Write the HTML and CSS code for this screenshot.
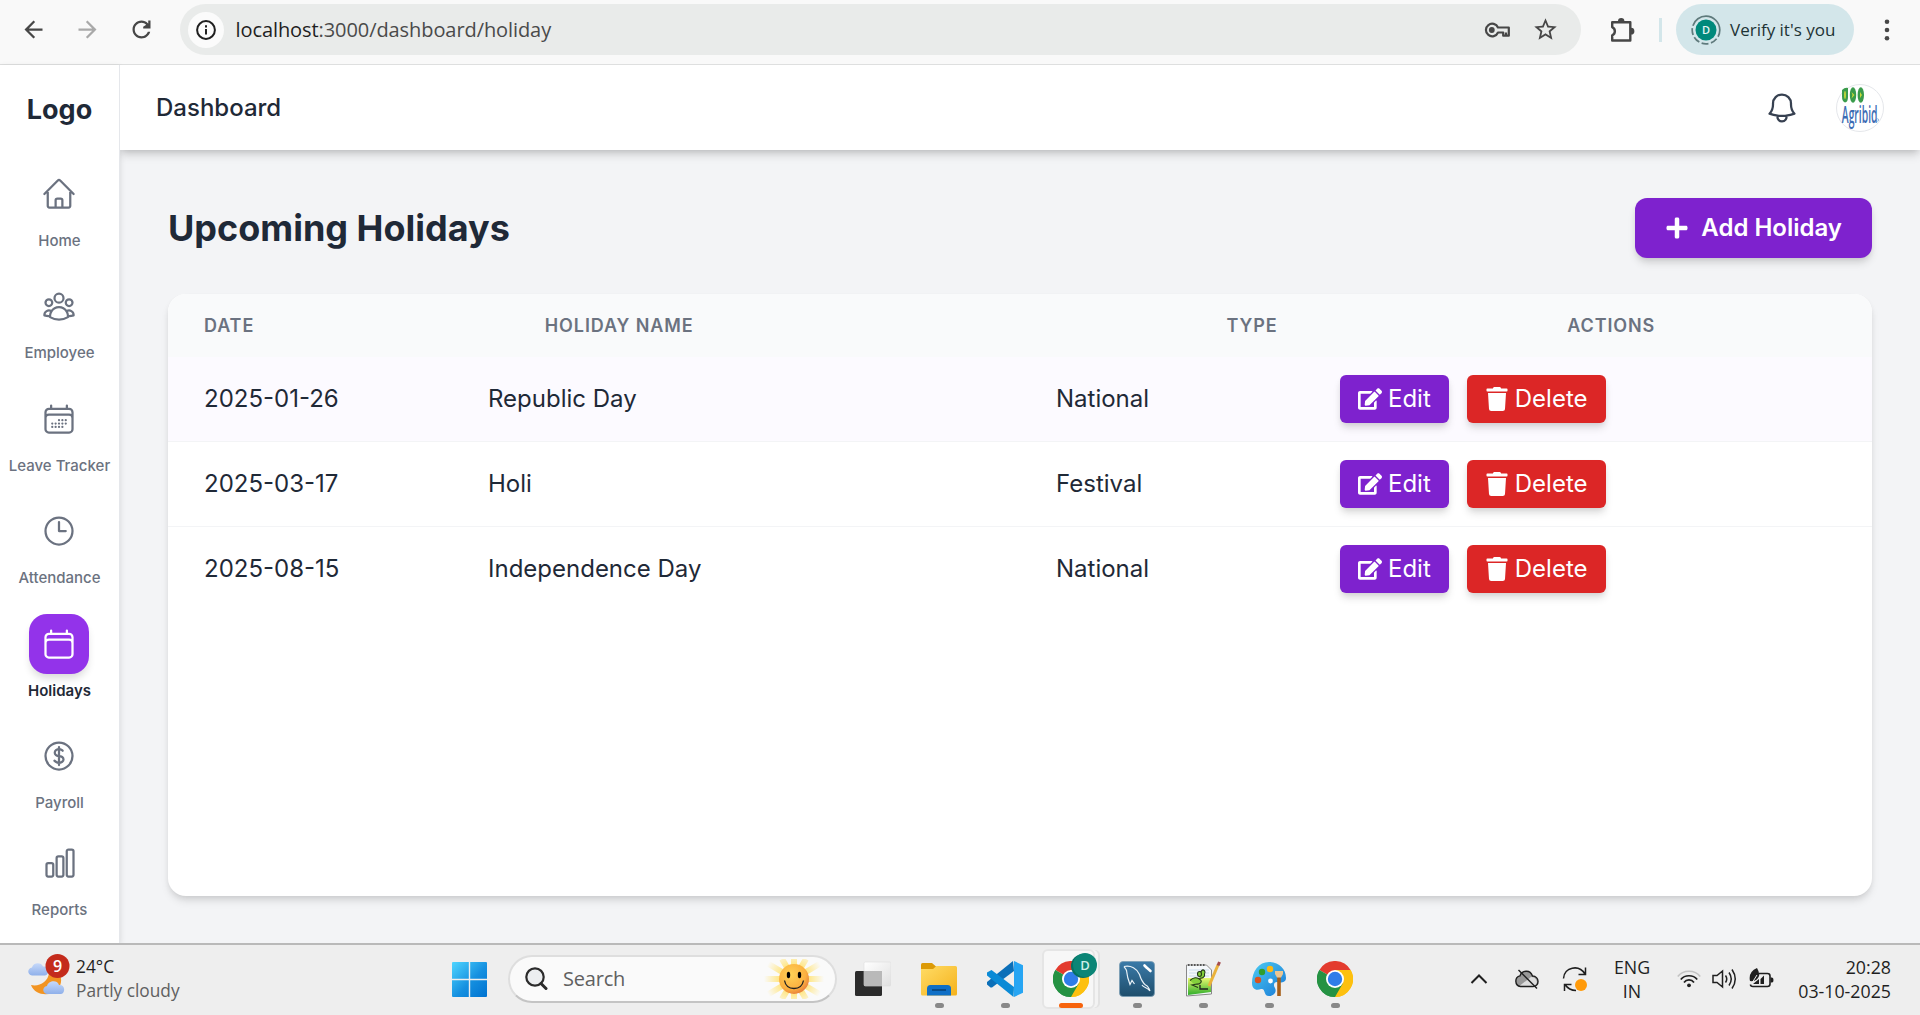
FILE: index.html
```html
<!DOCTYPE html>
<html lang="en">
<head>
<meta charset="utf-8">
<title>Dashboard - Holidays</title>
<link rel="stylesheet" href="styles.css">
</head>
<body>
<svg class="defs" width="0" height="0" aria-hidden="true">
  <defs>
    <symbol id="edit" viewBox="0 0 576 512"><path d="M402.6 83.2l90.2 90.2c3.8 3.8 3.8 10 0 13.8L274.4 405.6l-92.8 10.3c-12.4 1.4-22.9-9.1-21.5-21.5l10.3-92.8L388.8 83.2c3.8-3.8 10-3.8 13.8 0zm162-22.9l-48.8-48.8c-15.2-15.2-39.9-15.2-55.2 0l-35.4 35.4c-3.8 3.8-3.8 10 0 13.8l90.2 90.2c3.8 3.8 10 3.8 13.8 0l35.4-35.4c15.2-15.3 15.2-40 0-55.2zM384 346.2V448H64V128h229.8c3.2 0 6.2-1.3 8.5-3.5l40-40c7.6-7.6 2.2-20.5-8.5-20.5H48C21.5 64 0 85.5 0 112v352c0 26.5 21.5 48 48 48h352c26.5 0 48-21.5 48-48V306.2c0-10.7-12.9-16-20.5-8.5l-40 40c-2.2 2.3-3.5 5.3-3.5 8.5z"/></symbol>
    <symbol id="trash" viewBox="0 0 448 512"><path d="M432 32H312l-9.4-18.7A24 24 0 0 0 281.1 0H166.8a23.72 23.72 0 0 0-21.4 13.3L136 32H16A16 16 0 0 0 0 48v32a16 16 0 0 0 16 16h416a16 16 0 0 0 16-16V48a16 16 0 0 0-16-16zM53.2 467a48 48 0 0 0 47.9 45h245.8a48 48 0 0 0 47.9-45L416 128H32z"/></symbol>
    <symbol id="chrome" viewBox="0 0 36 36">
      <path d="M18 18 2.4 9A18 18 0 0 1 33.6 9z" fill="#e33b2e"/>
      <path d="M18 18 33.6 9A18 18 0 0 1 18 36z" fill="#fdc00f"/>
      <path d="M18 18V36A18 18 0 0 1 2.4 9z" fill="#259243"/>
      <path d="M18 9H33.6A18 18 0 0 1 18 36L25.8 22.5z" fill="#fdc00f"/>
      <path d="M10.2 22.5 2.4 9A18 18 0 0 0 18 36L25.8 22.5z" fill="#259243"/>
      <circle cx="18" cy="18" r="9" fill="#fff"/><circle cx="18" cy="18" r="7.2" fill="#2f7de9"/>
    </symbol>
    <linearGradient id="win" x1="0" y1="0" x2="1" y2="1"><stop offset="0" stop-color="#4fd5ff"/><stop offset=".55" stop-color="#1590e0"/><stop offset="1" stop-color="#0072d0"/></linearGradient>
    <linearGradient id="folder" x1="0" y1="0" x2="1" y2="1"><stop offset="0" stop-color="#ffdc66"/><stop offset="1" stop-color="#f5b21c"/></linearGradient>
    <linearGradient id="sql" x1="0" y1="0" x2="0" y2="1"><stop offset="0" stop-color="#3a7aa8"/><stop offset="1" stop-color="#1f4e6c"/></linearGradient>
    <linearGradient id="paint" x1="0" y1="0" x2="1" y2="1"><stop offset="0" stop-color="#4ccbf2"/><stop offset="1" stop-color="#1878d6"/></linearGradient>
    <linearGradient id="cloud" x1="0" y1="0" x2="0" y2="1"><stop offset="0" stop-color="#c6d9fa"/><stop offset="1" stop-color="#8fb0ea"/></linearGradient>
    <linearGradient id="grass" x1="0" y1="0" x2="0" y2="1"><stop offset="0" stop-color="#e8f870"/><stop offset="1" stop-color="#2fae2b"/></linearGradient>
    <linearGradient id="glass" x1="0" y1="0" x2="1" y2="1"><stop offset="0" stop-color="#fff"/><stop offset="1" stop-color="#e0e0e0"/></linearGradient>
    <radialGradient id="smile" cx=".4" cy=".35" r=".7"><stop offset="0" stop-color="#ffd257"/><stop offset=".7" stop-color="#fbb040"/><stop offset="1" stop-color="#e5793c"/></radialGradient>
    <radialGradient id="rays" gradientUnits="userSpaceOnUse" cx="30" cy="20" r="30"><stop offset=".5" stop-color="#ffe78a"/><stop offset="1" stop-color="#ffe78a" stop-opacity="0"/></radialGradient>
  </defs>
</svg>

<header class="browser">
  <div class="nav">
    <svg class="mi" viewBox="0 0 24 24"><path d="M20 11H7.83l5.59-5.59L12 4l-8 8 8 8 1.41-1.41L7.83 13H20v-2z"/></svg>
    <svg class="mi off" viewBox="0 0 24 24"><path d="M12 4l-1.41 1.41L16.17 11H4v2h12.17l-5.58 5.59L12 20l8-8z"/></svg>
    <svg class="mi" viewBox="0 0 24 24"><path d="M17.65 6.35C16.2 4.9 14.21 4 12 4c-4.42 0-7.99 3.58-7.99 8s3.57 8 7.99 8c3.73 0 6.84-2.55 7.73-6h-2.08c-.82 2.33-3.04 4-5.65 4-3.31 0-6-2.69-6-6s2.69-6 6-6c1.66 0 3.14.69 4.22 1.78L13.500 9.500V11H20V4h-2v2.700z"/></svg>
  </div>
  <div class="url">
    <span class="info"><svg width="20" height="20" viewBox="0 0 20 20" fill="none" stroke="#1f1f1f" stroke-width="2"><circle cx="10" cy="10" r="8.9"/><path d="M10 9v5.500M10 5.200v2.200"/></svg></span>
    <span class="address"><b>localhost</b>:3000/dashboard/holiday</span>
    <svg width="27" height="18" viewBox="0 0 27 18" fill="none" stroke="#474747" stroke-width="2.200"><path d="M14 6.500A6.300 6.300 0 1 0 14 11.500h5.200v3.200h5.600V6.500z" stroke-linejoin="round"/><circle cx="7.800" cy="9" r="2.900" fill="#474747" stroke="none"/><path d="M22 11.500v3"/></svg>
    <svg class="mi star" viewBox="0 0 24 24"><path d="M22 9.240l-7.190-.62L12 2 9.190 8.630 2 9.240l5.460 4.730L5.820 21 12 17.270 18.180 21l-1.630-7.030L22 9.240zM12 15.400l-3.760 2.270 1-4.280-3.320-2.880 4.380-.38L12 6.100l1.710 4.040 4.380.38-3.320 2.880 1 4.280L12 15.400z"/></svg>
  </div>
  <svg class="puzzle" width="26" height="26" viewBox="0 0 26 26"><path d="M3.200 5.200h18.100v18.300H3.200v-5.200a4.500 4.500 0 0 0 0-8.200z" fill="none" stroke="#474747" stroke-width="2.400" stroke-linejoin="round"/><path d="M9 4.200a3.200 3.200 0 0 1 6.400 0zM22 10.800a3.400 3.400 0 0 1 0 6.800z" fill="#474747"/></svg>
  <span class="split"></span>
  <div class="verify">
    <svg width="30" height="30" viewBox="0 0 30 30"><circle cx="15" cy="15" r="13.800" fill="none" stroke="#5f7a7c" stroke-width="1.700" stroke-dasharray="7 2.500 7 2.500 7 2.500 7 2.500 7 2.500 39.200 0"/><circle cx="15" cy="15" r="10.500" fill="#00897b"/><text x="15" y="19" text-anchor="middle" class="initial">D</text></svg>
    <span>Verify it's you</span>
  </div>
  <svg class="dots" width="6" height="22" viewBox="0 0 6 22"><circle cx="3" cy="2.700" r="2.300"/><circle cx="3" cy="11" r="2.300"/><circle cx="3" cy="19.300" r="2.300"/></svg>
</header>

<div class="app">
  <aside class="sidebar">
    <div class="logo">Logo</div>
    <nav class="menu">
      <a class="item"><span class="tile"><svg viewBox="0 0 24 24"><path d="M2.250 12l8.954-8.955a1.126 1.126 0 011.591 0L21.750 12M4.500 9.750v10.125c0 .621.504 1.125 1.125 1.125H9.750v-4.875c0-.621.504-1.125 1.125-1.125h2.250c.621 0 1.125.504 1.125 1.125V21h4.125c.621 0 1.125-.504 1.125-1.125V9.750M8.250 21h8.250"/></svg></span><span>Home</span></a>
      <a class="item"><span class="tile"><svg viewBox="0 0 24 24"><path d="M18 18.720a9.094 9.094 0 003.741-.479 3 3 0 00-4.682-2.720m.94 3.198l.001.031c0 .225-.012.447-.037.666A11.944 11.944 0 0112 21c-2.170 0-4.207-.576-5.963-1.584A6.062 6.062 0 016 18.719m12 0a5.971 5.971 0 00-.941-3.197m0 0A5.995 5.995 0 0012 12.750a5.995 5.995 0 00-5.058 2.772m0 0a3 3 0 00-4.681 2.720 8.986 8.986 0 003.740.477m.94-3.197a5.971 5.971 0 00-.94 3.197M15 6.750a3 3 0 11-6 0 3 3 0 016 0zm6 3a2.250 2.250 0 11-4.500 0 2.250 2.250 0 014.500 0zm-13.500 0a2.250 2.250 0 11-4.500 0 2.250 2.250 0 014.500 0z"/></svg></span><span>Employee</span></a>
      <a class="item"><span class="tile"><svg viewBox="0 0 24 24"><path d="M6.750 3v2.250M17.250 3v2.250M3 18.750V7.500a2.250 2.250 0 012.250-2.250h13.500A2.250 2.250 0 0121 7.500v11.250m-18 0A2.250 2.250 0 005.250 21h13.500A2.250 2.250 0 0021 18.750m-18 0v-7.500A2.250 2.250 0 015.250 9h13.500A2.250 2.250 0 0121 11.250v7.500m-9-6h.008v.008H12v-.008zM12 15h.008v.008H12V15zm0 2.250h.008v.008H12v-.008zM9.750 15h.008v.008H9.750V15zm0 2.250h.008v.008H9.750v-.008zM7.500 15h.008v.008H7.500V15zm0 2.250h.008v.008H7.500v-.008zm6.750-4.500h.008v.008h-.008v-.008zm0 2.250h.008v.008h-.008V15zm0 2.250h.008v.008h-.008v-.008zm2.250-4.500h.008v.008H16.500v-.008zm0 2.250h.008v.008H16.500V15z"/></svg></span><span>Leave Tracker</span></a>
      <a class="item"><span class="tile"><svg viewBox="0 0 24 24"><path d="M12 6v6h4.500m4.500 0a9 9 0 11-18 0 9 9 0 0118 0z"/></svg></span><span>Attendance</span></a>
      <a class="item active"><span class="tile"><svg viewBox="0 0 24 24"><path d="M6.750 3v2.250M17.250 3v2.250M3 18.750V7.500a2.250 2.250 0 012.250-2.250h13.500A2.250 2.250 0 0121 7.500v11.250m-18 0A2.250 2.250 0 005.250 21h13.500A2.250 2.250 0 0021 18.750m-18 0v-7.500A2.250 2.250 0 015.250 9h13.500A2.250 2.250 0 0121 11.250v7.500"/></svg></span><span>Holidays</span></a>
      <a class="item"><span class="tile"><svg viewBox="0 0 24 24"><path d="M12 6v12m-3-2.818l.879.659c1.171.879 3.070.879 4.242 0 1.172-.879 1.172-2.303 0-3.182C13.536 12.219 12.768 12 12 12c-.725 0-1.450-.220-2.003-.659-1.106-.879-1.106-2.303 0-3.182s2.900-.879 4.006 0l.415.330M21 12a9 9 0 11-18 0 9 9 0 0118 0z"/></svg></span><span>Payroll</span></a>
      <a class="item last"><span class="tile"><svg viewBox="0 0 24 24"><path d="M3 13.125C3 12.504 3.504 12 4.125 12h2.250c.621 0 1.125.504 1.125 1.125v6.750C7.500 20.496 6.996 21 6.375 21h-2.250A1.125 1.125 0 013 19.875v-6.750zM9.750 8.625c0-.621.504-1.125 1.125-1.125h2.250c.621 0 1.125.504 1.125 1.125v11.250c0 .621-.504 1.125-1.125 1.125h-2.250a1.125 1.125 0 01-1.125-1.125V8.625zM16.500 4.125c0-.621.504-1.125 1.125-1.125h2.250C20.496 3 21 3.504 21 4.125v15.750c0 .621-.504 1.125-1.125 1.125h-2.250a1.125 1.125 0 01-1.125-1.125V4.125z"/></svg></span><span>Reports</span></a>
    </nav>
  </aside>

  <div class="page">
    <header class="topbar">
      <span class="crumb">Dashboard</span>
      <svg class="bell" viewBox="0 0 24 24"><path d="M14.857 17.082a23.848 23.848 0 005.454-1.310A8.967 8.967 0 0118 9.750v-.7V9A6 6 0 006 9v.75a8.967 8.967 0 01-2.312 6.022c1.733.64 3.560 1.085 5.455 1.310m5.714 0a24.255 24.255 0 01-5.714 0m5.714 0a3 3 0 11-5.714 0"/></svg>
      <svg class="avatar" viewBox="0 0 48 48">
        <circle cx="24" cy="24" r="23.500" fill="#fff" stroke="#e5e7eb"/>
        <g fill="#3a9b4b"><path d="M6 6q3-3 6-2v9q0 5-3 5.500-3-1-3-6z"/><ellipse cx="17" cy="11" rx="3.200" ry="7.700"/><ellipse cx="24.800" cy="11" rx="3.200" ry="7.700"/></g>
        <g fill="#c8d93a"><ellipse cx="9" cy="11" rx=".9" ry="4"/><path d="M15.500 8l3 3-3 3.500 1-3.500z"/><path d="M24 8l2 3-2 3z"/></g>
        <text class="brand" transform="translate(5.800 38.500) scale(.45 1)">Agribid</text>
        <circle cx="41.500" cy="36" r="1.200" fill="none" stroke="#5b8fd0" stroke-width=".6"/>
      </svg>
    </header>

    <main class="content">
      <div class="heading">
        <h1>Upcoming Holidays</h1>
        <button class="btn add"><svg viewBox="0 0 448 512"><path d="M416 208H272V64c0-17.670-14.330-32-32-32h-32c-17.670 0-32 14.330-32 32v144H32c-17.670 0-32 14.330-32 32v32c0 17.670 14.330 32 32 32h144v144c0 17.670 14.330 32 32 32h32c17.670 0 32-14.330 32-32V304h144c17.670 0 32-14.330 32-32v-32c0-17.670-14.330-32-32-32z"/></svg>Add Holiday</button>
      </div>
      <section class="card">
        <div class="thead"><span>Date</span><span class="wide">Holiday Name</span><span>Type</span><span>Actions</span></div>
        <div class="row tint"><span>2025-01-26</span><span class="wide">Republic Day</span><span>National</span><div class="actions"><button class="btn edit"><svg><use href="#edit"/></svg>Edit</button><button class="btn delete"><svg><use href="#trash"/></svg>Delete</button></div></div>
        <div class="row"><span>2025-03-17</span><span class="wide">Holi</span><span>Festival</span><div class="actions"><button class="btn edit"><svg><use href="#edit"/></svg>Edit</button><button class="btn delete"><svg><use href="#trash"/></svg>Delete</button></div></div>
        <div class="row"><span>2025-08-15</span><span class="wide">Independence Day</span><span>National</span><div class="actions"><button class="btn edit"><svg><use href="#edit"/></svg>Edit</button><button class="btn delete"><svg><use href="#trash"/></svg>Delete</button></div></div>
      </section>
    </main>
  </div>
</div>

<footer class="taskbar">
  <div class="weather">
    <svg width="42" height="42" viewBox="0 0 42 42">
      <path d="M3 31c8 2 17-3 18-12l6-3c7 3 8 13 3 19-7 8-23 7-27-4z" fill="#f29422"/>
      <path d="M4 21.500c-5-1-5-7 0-8 1-5 9-6 11-1 6-1 7 8 2 9z" fill="url(#cloud)"/>
      <path d="M19 40c-5-1-5-7 0-8 1-5 10-7 12-1 6-1 7 8 2 9z" fill="url(#cloud)"/>
      <circle cx="29.500" cy="12" r="12" fill="#c42b1c"/>
      <text x="29.500" y="17.500" text-anchor="middle" class="count">9</text>
    </svg>
    <div class="forecast"><div>24°C</div><div class="muted">Partly cloudy</div></div>
  </div>

  <svg class="start" width="35" height="35" viewBox="0 0 35 35" fill="url(#win)"><path d="M1 0h15.800v16.800H0V1a1 1 0 0 1 1-1zM18.200 0H34a1 1 0 0 1 1 1v15.800H18.200zM0 18.200h16.800V35H1a1 1 0 0 1-1-1zM18.200 18.200H35V34a1 1 0 0 1-1 1H18.200z"/></svg>

  <div class="search">
    <svg width="23" height="24" viewBox="0 0 23 24" fill="#eceef0" stroke="#2b2b2b"><circle cx="10" cy="10" r="8.700" stroke-width="2.200"/><path d="M16 16.500l5 5" stroke-width="3" stroke-linecap="round"/></svg>
    <span>Search</span>
    <svg class="sun" width="60" height="40" viewBox="0 0 60 40">
      <g stroke="url(#rays)" stroke-width="6"><path d="M0 20.010H60M30.010 0V40M18 0 42 40M42 0 18 40M3 4 57 36M57 4 3 36"/></g>
      <circle cx="30" cy="20" r="15" fill="url(#smile)"/>
      <ellipse cx="24.500" cy="16" rx="1.700" ry="3.300"/><ellipse cx="35.500" cy="16" rx="1.700" ry="3.300"/>
      <path d="M20.500 21.500q1.500 8 9.500 8t9.500-8" fill="none" stroke="#222" stroke-width="1.300"/>
    </svg>
  </div>

  <div class="tasks">
    <span class="task"><svg viewBox="0 0 36 36"><rect x="0" y="10" width="27" height="25" rx="1.500" fill="#2b2b2b"/><rect x="9" y="1" width="27" height="24" rx="1.500" fill="url(#glass)" stroke="#ddd" stroke-width=".6"/><path d="M9 10h18v15H9z" fill="#b9b9b9"/></svg></span>
    <span class="task open"><svg viewBox="0 0 36 36"><path d="M0 3.500Q0 2 1.500 2H11l4 3.500V12H0z" fill="#dc9a06"/><path d="M0 8h12l3.500-3H34.500Q36 5 36 6.500V33q0 1.500-1.500 1.500h-33Q0 34.500 0 33z" fill="url(#folder)"/><path d="M6 34.500v-7q0-3.500 3.500-3.500h17q3.500 0 3.500 3.500v7z" fill="#0f6fc6"/><path d="M11 29h14" stroke="#073f75" stroke-width="1.500"/></svg></span>
    <span class="task open"><svg viewBox="0 0 36 36"><path d="M26 0 27 10 5 26.500 3.500 26.500 0 23.500V21z" fill="#0b6fb8"/><path d="M26.500 36 0 14.500V11.500L4.500 9 27 26z" fill="#0a8ad6"/><path d="M27 0 36 4.200V31.800L27 36z" fill="#26a5f3"/></svg></span>
    <span class="task open current"><svg viewBox="0 0 36 36"><use href="#chrome"/></svg><i class="badge">D</i></span>
    <span class="task open"><svg viewBox="0 0 36 36"><rect x=".5" y=".5" width="35" height="35" rx="3.500" fill="url(#sql)" stroke="#7a9db4" stroke-width=".8"/><path d="M5 5.500c7-1.500 13 2 15.500 8 1.500 5 3 8 6 10.500 2.500 1 3.500 3 4.500 6-3-4-6-3-8-6M5 5.500c1 2 2 2 2.500 4 .5 5 1.500 9 3.500 14l2-4 2.500 3.500" fill="none" stroke="#e8f1f7" stroke-width="1.200"/><path d="M25.500 4.500l2.500 2.500M27 6l4.500 4" stroke="#fff" stroke-width="2.600" stroke-linecap="round"/></svg></span>
    <span class="task open"><svg viewBox="0 0 36 36"><path d="M1.500 4h20l5 5v24L1.500 35z" fill="#f5f8fb" stroke="#888"/><path d="M3 4h18" stroke="#555" stroke-width="2" stroke-dasharray="1.500 1.500"/><path d="M4 9h20M4 12h20M4 15h20" stroke="#c0d4ea" stroke-width=".8"/><path d="M3 17h23v14L3 34z" fill="url(#grass)"/><path d="M5 19.500c3-3 7-4 10-1 3 2 0 5-3 4.500l-5 1 6 2.500M12.500 13a2 2.500 0 1 1 4 0 2 2.500 0 1 1-4 0M16.500 13a2 2.500 0 1 1 3 0v2q-2 3-5 2" fill="#83cf3c" stroke="#25391a" stroke-width="1.100"/><path d="M15 24v4h8" fill="none" stroke="#222" stroke-width="1.300"/><path d="M33 4 24 25" stroke="#eab23a" stroke-width="3"/><path d="M34.500 1 33 4.500" stroke="#a44c4c" stroke-width="3"/></svg></span>
    <span class="task open"><svg viewBox="0 0 36 36"><path d="M18 1c10 0 17 7 17 16 0 5-6 5-9 4-3 0-4 3-2 6 2 4-1 8-6 8-6 0-3-8-8-7-5 2-9 0-9-6C1 10 8 1 18 1z" fill="url(#paint)"/><circle cx="11" cy="11" r="3.200" fill="#2f9e2d"/><circle cx="19" cy="8" r="3.200" fill="#fcb813"/><circle cx="7" cy="19" r="3.200" fill="#d9531e"/><circle cx="19.500" cy="20" r="2.400" fill="#fff"/><path d="M26.200 14h3.600v21h-3.600z" fill="#a65f1a"/><path d="M24 10h8v3l-2 3.500h-4L24 13z" fill="#e9c592"/></svg></span>
    <span class="task open"><svg viewBox="0 0 36 36"><use href="#chrome"/></svg></span>
  </div>

  <div class="tray">
    <svg class="chev" width="18" height="12" viewBox="0 0 18 12" fill="none" stroke="#1f1f1f" stroke-width="2"><path d="M1.500 10 9 2.500 16.500 10"/></svg>
    <svg class="cloud" width="26" height="22" viewBox="0 0 26 22"><path d="M6.500 18.500a5.400 5.400 0 0 1-.5-10.600C7.500 2.500 16 1 18.500 8c7 0 7.500 10.500.5 10.500z" fill="#999" stroke="#1f1f1f" stroke-width="1.400"/><path d="M6 17.500 17 9q5 0 6 5-1 4-5 3.600z" fill="#ddd"/><path d="M4.500 2 23 20.500" stroke="#1f1f1f" stroke-width="1.500"/></svg>
    <svg class="sync" width="26" height="26" viewBox="0 0 26 26" fill="none" stroke="#1f1f1f" stroke-width="1.500"><path d="M1.500 12.500C2 1 17-2 23 8M23.500 1.500V8.500H16.500M2.500 25V18.500H9.500M3 18.500q4 6 11 6"/><circle cx="19" cy="19" r="6" fill="#ff9a0a" stroke="none"/></svg>
    <div class="lang"><div>ENG</div><div>IN</div></div>
    <svg class="wifi" width="24" height="18" viewBox="0 0 24 18" fill="none" stroke="#1f1f1f" stroke-width="1.700"><path d="M.8 6.500C6-.5 18-.5 23.200 6.500" stroke="#c3c3c3"/><path d="M3.800 9.500c4-5 12.400-5 16.400 0M7 12.500c2.500-3.500 7.500-3.500 10 0"/><circle cx="12" cy="15.300" r="1.900" fill="#1f1f1f" stroke="none"/></svg>
    <svg class="vol" width="25" height="22" viewBox="0 0 25 22" fill="none" stroke="#1f1f1f" stroke-width="1.500"><path d="M1 7.500h4L10.500 3v16L5 14.500H1zM13.500 7.500q2.500 3.500 0 7M17 4.500q4.500 6.500 0 13M20 1.500q6.500 9.500 0 19"/></svg>
    <svg class="batt" width="25" height="20" viewBox="0 0 25 20"><path d="M10 5.500h8.500q2.500 0 2.500 2.500v8q0 2.500-2.500 2.500H4q-2.500 0-2.500-2" fill="none" stroke="#1f1f1f" stroke-width="1.600"/><path d="M21.500 9.500h1.500q1.500 0 1.500 2.500t-1.500 2.500h-1.500zM8 0q3 5 2 8-2 6-9 5Q-1 4 8 0zM4 16 10 11V16zM11.500 16 11.500 11 15 7.500V16z" fill="#1f1f1f"/><path d="M3 15 8 7" stroke="#eee" stroke-width="1"/></svg>
    <div class="clock"><div>20:28</div><div>03-10-2025</div></div>
  </div>
</footer>
</body>
</html>
```
FILE: styles.css
```css
* { box-sizing: border-box; }
html, body { height: 100%; }
body {
  margin: 0;
  display: flex;
  flex-direction: column;
  overflow: hidden;
  font-family: Inter, "Liberation Sans", sans-serif;
  font-size: 24px;
  color: #1f2937;
  background: #f3f4f6;
}
svg { display: block; flex: none; }
.defs { position: absolute; }

/* Browser toolbar */
.browser {
  height: 65px;
  flex: none;
  display: flex;
  align-items: center;
  padding: 0 30px 5px 20px;
  background: #f9f9f9;
  border-bottom: 1px solid #dedfdf;
  font-family: "Open Sans", "Noto Sans", sans-serif;
}
.nav { display: flex; gap: 27px; width: 160px; }
.mi { width: 27px; height: 27px; fill: #474747; }
.mi.off { fill: #a9a9a9; }
.url {
  width: 1401px;
  height: 51px;
  display: flex;
  align-items: center;
  padding: 0 22px 0 8px;
  border-radius: 26px;
  background: #e9ebea;
}
.info {
  width: 36px;
  height: 36px;
  margin-right: 11.500px;
  display: grid;
  place-items: center;
  border-radius: 50%;
  background: #fbfbfb;
}
.address { flex: 1; font-size: 20px; letter-spacing: -.08px; color: #4a4a4a; white-space: nowrap; }
.address b { font-weight: 400; color: #1f1f1f; }
.star { margin-left: 21px; }
.puzzle { margin-left: 28px; }
.split { width: 3px; height: 24px; margin: 0 14px 0 24px; background: #d3e6ea; }
.verify {
  width: 178px;
  height: 51px;
  display: flex;
  align-items: center;
  gap: 9px;
  padding-left: 15px;
  border-radius: 26px;
  background: #d3e6ea;
  font-size: 17px;
  color: #1d3335;
  white-space: nowrap;
}
.initial { font: 600 11px "Open Sans", sans-serif; fill: #e6f6f4; }
.dots { margin-left: auto; fill: #474747; }

/* Application shell */
.app { flex: 1; min-height: 0; display: flex; }
.sidebar {
  width: 120px;
  flex: none;
  background: #fff;
  border-right: 1px solid #e5e7eb;
  box-shadow: 0 2px 6px rgba(0, 0, 0, .12);
  text-align: center;
}
.logo { padding-top: 27px; font-size: 27px; line-height: 36px; font-weight: 700; }
.menu { display: flex; flex-direction: column; padding-top: 36px; gap: 12.400px; }
.item {
  height: 100px;
  display: flex;
  flex-direction: column;
  align-items: center;
  gap: 5px;
  font-size: 15px;
  line-height: 24px;
  font-weight: 500;
  color: #6b7280;
  white-space: nowrap;
}
.tile { width: 60px; height: 60px; margin-right: 1px; display: grid; place-items: center; border-radius: 18px; }
.tile svg, .bell {
  width: 36px;
  height: 36px;
  fill: none;
  stroke: currentColor;
  stroke-width: 1.5;
  stroke-linecap: round;
  stroke-linejoin: round;
}
.active { font-weight: 600; color: #1f2937; }
.active .tile { background: #9333ea; color: #fff; box-shadow: 0 6px 9px -2px rgba(0, 0, 0, .16); }
.item.last { margin-top: -5px; }
.last .tile { margin-right: 0; }

.page { flex: 1; min-width: 0; display: flex; flex-direction: column; }
.topbar {
  height: 85px;
  flex: none;
  display: flex;
  align-items: center;
  padding: 0 36px;
  background: #fff;
  box-shadow: 0 6px 9px -1px rgba(0, 0, 0, .14), 0 3px 6px -2px rgba(0, 0, 0, .12);
  clip-path: inset(0 0 -30px 0);
}
.crumb { flex: 1; font-weight: 500; }
.bell { color: #374151; margin-right: 36px; }
.avatar { width: 48px; height: 48px; overflow: visible; }
.brand { font: 600 23px "Open Sans", sans-serif; fill: #3c6cb4; }

.content { flex: 1; min-height: 0; display: flex; flex-direction: column; padding: 48px 48px 47px; }
.heading { display: flex; justify-content: space-between; align-items: center; margin-bottom: 36px; }
h1 { margin: 0; font-size: 36px; font-weight: 700; line-height: 48px; }
.btn {
  display: flex;
  align-items: center;
  border: 0;
  color: #fff;
  font: 400 24px/36px Inter, "Liberation Sans", sans-serif;
  white-space: nowrap;
  box-shadow: 0 6px 9px -1px rgba(0, 0, 0, .12), 0 3px 6px -2px rgba(0, 0, 0, .1);
}
.btn svg { width: 24px; height: 24px; fill: currentColor; }
.add { height: 60px; padding: 0 30px; gap: 12px; border-radius: 12px; font-weight: 600; background: #7e22ce; }
.card {
  flex: 1;
  border-radius: 18px;
  overflow: hidden;
  background: #fff;
  box-shadow: 0 6px 9px -1px rgba(0, 0, 0, .1), 0 3px 6px -2px rgba(0, 0, 0, .1);
}
.thead {
  height: 63px;
  display: grid;
  grid-template-columns: repeat(5, 1fr);
  align-items: center;
  background: #f9fafb;
  color: #6b7280;
  font-size: 18px;
  font-weight: 600;
  letter-spacing: .9px;
  text-transform: uppercase;
}
.row {
  height: 85px;
  display: grid;
  grid-template-columns: repeat(6, 1fr);
  align-items: center;
  border-bottom: 1px solid #f3f4f6;
}
.row:last-child { border-bottom-color: transparent; }
.tint { background: #fcfaff; }
.thead span, .row span { padding-left: 36px; }
.row span { line-height: 36px; }
.wide { grid-column: span 2; }
.actions { grid-column: span 2; display: flex; gap: 18px; padding-left: 36px; }
.actions .btn { height: 48px; padding: 0 18px; gap: 6px; border-radius: 6px; }
.edit { background: #7e22ce; }
.delete { background: #dc2626; }

/* Desktop taskbar */
.taskbar {
  height: 72px;
  flex: none;
  display: flex;
  align-items: center;
  padding: 0 29px 2px 28px;
  background: #eee;
  border-top: 2px solid #b9b9b9;
  font: 18px/24px "Open Sans", "Noto Sans", sans-serif;
  color: #1f1f1f;
  position: relative;
  z-index: 1;
}
.weather { width: 424px; display: flex; gap: 6px; align-items: center; }
.weather svg { margin-bottom: 8px; }
.count { font: 600 16px "Open Sans", sans-serif; fill: #fff; }
.forecast { font-size: 17.300px; }
.muted { color: #606060; }
.search {
  width: 329px;
  height: 48px;
  margin: 0 3px 0 21px;
  display: flex;
  align-items: center;
  gap: 15px;
  padding: 0 11px 0 15px;
  border: 2px solid #dedede;
  border-bottom-color: #c4c4c4;
  border-radius: 24px;
  background: #fafafa;
  font-size: 20px;
  letter-spacing: -.2px;
  color: #606060;
}
.search span { flex: 1; }
.tasks { display: grid; grid-template-columns: repeat(8, 66px); }
.task { position: relative; height: 60px; display: grid; place-items: center; }
.task svg { width: 36px; height: 36px; z-index: 1; }
.open::after {
  content: "";
  position: absolute;
  left: 28.500px;
  bottom: 1px;
  width: 9px;
  height: 5px;
  border-radius: 3px;
  background: #888;
}
.current::before {
  content: "";
  position: absolute;
  inset: 0 9px 0 4px;
  border: 2px solid #e5e5e5;
  border-radius: 6px;
  background: #f7f7f7;
  box-shadow: 4px 0 0 -1px #f3f3f3, 6px 0 0 -1px #e2e2e2;
}
.current::after { left: 21px; width: 24px; background: #f7630c; }
.badge {
  position: absolute;
  z-index: 2;
  left: 35px;
  top: 4px;
  width: 24px;
  height: 24px;
  border-radius: 50%;
  background: #0b8576;
  box-shadow: -2px 1px 0 #067062;
  color: #cfeee9;
  font: 600 13px/24px "Open Sans", sans-serif;
  text-align: center;
}
.tray { flex: 1; display: flex; align-items: center; font-size: 17.800px; }
.chev { margin: 0 26px 0 102px; }
.sync { margin: 0 19px 0 22px; }
.lang { width: 50px; text-align: center; }
.wifi { margin: 0 11px 0 20px; }
.batt { margin: 0 0 2px 12px; }
.clock { flex: 1; text-align: right; white-space: nowrap; }
```
